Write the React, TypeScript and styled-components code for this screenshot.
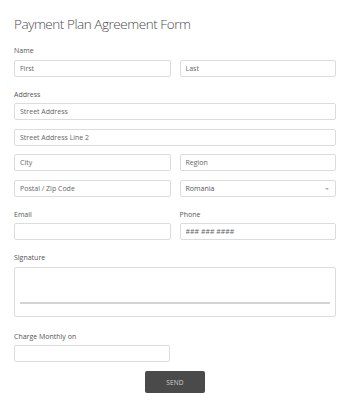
import React from 'react'
import styled, { createGlobalStyle } from 'styled-components'

const GlobalStyle = createGlobalStyle`
  html, body {
    margin: 0;
    padding: 0;
    background: #ffffff;
  }
  body {
    font-family: "Open Sans", "Liberation Sans", sans-serif;
    color: #555555;
  }
  * {
    box-sizing: border-box;
  }
`

const FormContainer = styled.form`
  width: 350px;
  padding: 13px 14px 14px 14px;
  display: flex;
  flex-direction: column;
`

const Title = styled.h1`
  margin: 0 0 11px 0;
  font-size: 13.5px;
  line-height: 22px;
  font-weight: 300;
  letter-spacing: -0.45px;
  color: #4a4a4a;
`

const FieldGroup = styled.div<{ $gap?: number }>`
  display: flex;
  flex-direction: column;
  margin-bottom: ${p => p.$gap ?? 13}px;
`

const Label = styled.label`
  font-size: 7px;
  line-height: 10px;
  color: #555555;
  margin-bottom: 3.5px;
`

const Row = styled.div`
  display: grid;
  grid-template-columns: 1fr 1fr;
  column-gap: 9px;
`

const Stack = styled.div`
  display: flex;
  flex-direction: column;
  gap: 8.5px;
`

const Input = styled.input<{ $half?: boolean }>`
  width: ${p => (p.$half ? '156px' : '100%')};
  height: 17px;
  border: 1px solid #dcdcdc;
  border-radius: 2px;
  padding: 0 5px;
  font-family: "Open Sans", "Liberation Sans", sans-serif;
  font-size: 7px;
  color: #555555;
  background: #ffffff;
  outline: none;
  &::placeholder {
    color: #666666;
    opacity: 1;
  }
`

const SelectBox = styled.div`
  position: relative;
  height: 17px;
  border: 1px solid #dcdcdc;
  border-radius: 2px;
  padding: 0 5px;
  font-size: 7px;
  color: #555555;
  display: flex;
  align-items: center;
`

const Caret = styled.span`
  position: absolute;
  right: 6px;
  top: 7px;
  width: 0;
  height: 0;
  border-left: 2.5px solid transparent;
  border-right: 2.5px solid transparent;
  border-top: 2.5px solid #aaaaaa;
`

const SignaturePad = styled.div`
  height: 50px;
  border: 1px solid #dcdcdc;
  border-radius: 2px;
  display: flex;
  flex-direction: column;
  justify-content: flex-end;
  padding: 0 5px 12px 5px;
`

const SignatureLine = styled.div`
  height: 2px;
  background: #d3d3d3;
`

const ButtonRow = styled.div`
  display: flex;
  justify-content: center;
  margin-top: -4px;
`

const SendButton = styled.button`
  width: 60px;
  height: 22px;
  border: none;
  border-radius: 2px;
  background: #4a4a4a;
  color: #d0d0d0;
  font-family: "Open Sans", "Liberation Sans", sans-serif;
  font-size: 6.5px;
  letter-spacing: 0.2px;
  cursor: pointer;
`

const App = () => {
  return (
    <>
      <GlobalStyle />
      <FormContainer onSubmit={e => e.preventDefault()}>
        <Title>Payment Plan Agreement Form</Title>

        <FieldGroup>
          <Label>Name</Label>
          <Row>
            <Input placeholder="First" />
            <Input placeholder="Last" />
          </Row>
        </FieldGroup>

        <FieldGroup>
          <Label>Address</Label>
          <Stack>
            <Input placeholder="Street Address" />
            <Input placeholder="Street Address Line 2" />
            <Row>
              <Input placeholder="City" />
              <Input placeholder="Region" />
            </Row>
            <Row>
              <Input placeholder="Postal / Zip Code" />
              <SelectBox>
                Romania
                <Caret />
              </SelectBox>
            </Row>
          </Stack>
        </FieldGroup>

        <Row>
          <FieldGroup>
            <Label>Email</Label>
            <Input />
          </FieldGroup>
          <FieldGroup>
            <Label>Phone</Label>
            <Input placeholder="### ### ####" />
          </FieldGroup>
        </Row>

        <FieldGroup $gap={15}>
          <Label>Signature</Label>
          <SignaturePad>
            <SignatureLine />
          </SignaturePad>
        </FieldGroup>

        <FieldGroup>
          <Label>Charge Monthly on</Label>
          <Input $half />
        </FieldGroup>

        <ButtonRow>
          <SendButton type="submit">SEND</SendButton>
        </ButtonRow>
      </FormContainer>
    </>
  )
}

export default App
